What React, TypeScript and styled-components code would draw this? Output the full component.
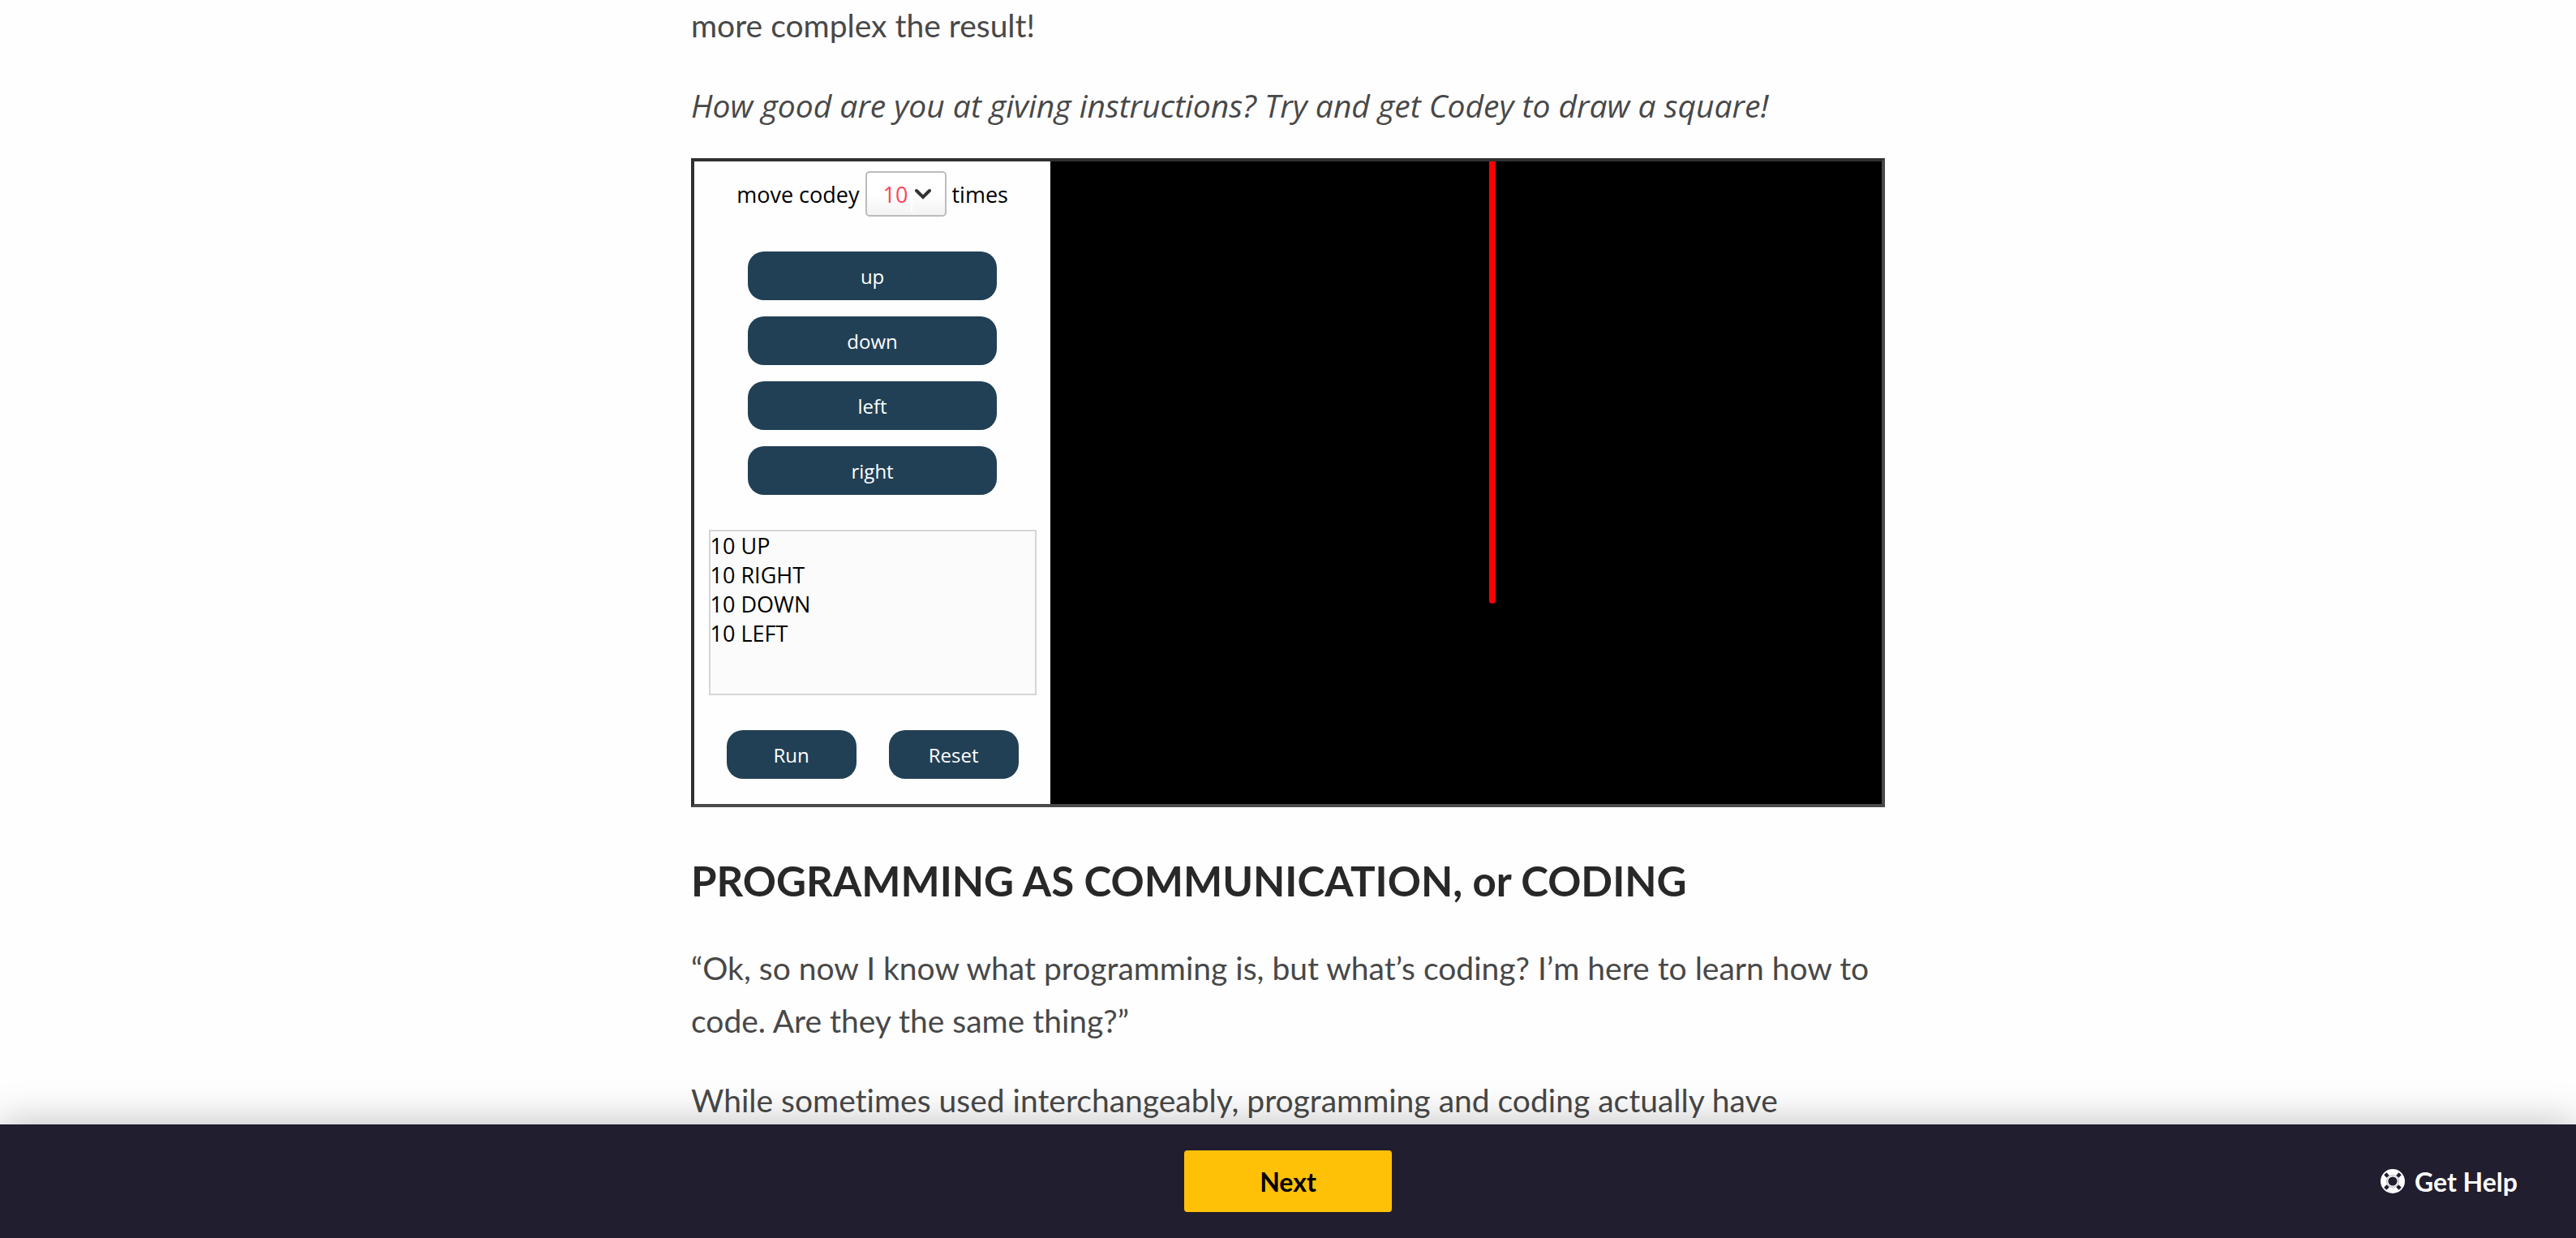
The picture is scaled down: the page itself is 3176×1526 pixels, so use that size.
import React, { useState } from "react";
import styled, { createGlobalStyle } from "styled-components";

const GlobalStyle = createGlobalStyle`
  *, *::before, *::after { box-sizing: border-box; }
  body {
    margin: 0;
    background: #fefefe;
    font-family: Lato, "Open Sans", sans-serif;
    font-variant-ligatures: none;
  }
`;

const Viewport = styled.div`
  display: flex;
  flex-direction: column;
  height: 100vh;
  overflow: hidden;
`;

const Scroll = styled.main`
  flex: 1;
  min-height: 0;
  overflow: hidden;
`;

const Article = styled.article`
  display: flex;
  flex-direction: column;
  gap: 33px;
  width: 100%;
  max-width: 1472px;
  margin: -1px auto 0;
`;

const Paragraph = styled.p`
  margin: 0;
  font-size: 39px;
  line-height: 65px;
  color: #484848;
`;

const Prompt = styled(Paragraph)`
  font-family: "Open Sans", sans-serif;
  font-style: italic;
`;

const Heading = styled.h2`
  margin: 27px 0 12px;
  font-size: 51px;
  line-height: 61px;
  font-weight: 700;
  color: #282828;
`;

const Frame = styled.section`
  display: flex;
  height: 800px;
  border: 4px solid;
  border-color: #303030 #4a4a4a #4a4a4a #303030;
  background: #fefefe;
  font-family: "Open Sans", sans-serif;
`;

const Controls = styled.div`
  display: flex;
  flex-direction: column;
  align-items: center;
  flex: 0 0 30%;
  padding-top: 12px;
`;

const MoveRow = styled.label`
  display: flex;
  align-items: center;
  gap: 7px;
  font-size: 27px;
  color: #000;
`;

const SelectBox = styled.span`
  display: grid;
  align-items: center;
  width: 100px;
  height: 56px;
`;

const Select = styled.select`
  grid-area: 1 / 1;
  width: 100%;
  height: 100%;
  appearance: none;
  padding: 0 0 0 20px;
  border: 2px solid #bcbcbc;
  border-radius: 5px;
  background:
    linear-gradient(#fff, #fff) 54px 28px / 2px 20px no-repeat,
    linear-gradient(#fff 50%, #f3f3f3);
  color: #fd4659;
  font: inherit;
`;

const Chevron = styled.svg`
  grid-area: 1 / 1;
  justify-self: end;
  margin-right: 19px;
  pointer-events: none;
`;

const Button = styled.button`
  height: 60px;
  border: 0;
  border-radius: 20px;
  background: #224055;
  color: #fff;
  font: 24px "Open Sans", sans-serif;
`;

const Directions = styled.div`
  display: grid;
  gap: 20px;
  width: 70%;
  margin-top: 43px;
`;

const Program = styled.textarea`
  display: block;
  width: 92%;
  height: 204px;
  margin-top: 43px;
  padding: 0;
  border: 2px solid #d5d5d5;
  background: #fbfbfb;
  color: #000;
  font: 27px/36px "Open Sans", sans-serif;
  resize: none;
`;

const Actions = styled.div`
  display: grid;
  grid-template-columns: 160px 160px;
  gap: 40px;
  margin-top: 43px;
`;

const Stage = styled.div`
  flex: 1;
  display: flex;
  background: #000;
`;

const Drawing = styled.svg`
  width: 100%;
  height: 100%;
`;

const Footer = styled.footer`
  z-index: 1;
  display: grid;
  grid-template-columns: 1fr 256px 1fr;
  align-items: center;
  height: 140px;
  background: #211e2f;
  box-shadow: 0 0 50px rgba(0, 0, 0, 0.27);
`;

const Next = styled.button`
  grid-column: 2;
  height: 76px;
  border: 0;
  border-radius: 4px;
  background: #ffc107;
  color: #000;
  font: 700 32px Lato, sans-serif;
`;

const Help = styled.a`
  justify-self: end;
  display: flex;
  align-items: center;
  gap: 12px;
  margin-right: 72px;
  color: #fff;
  font-size: 32px;
  font-weight: 700;
  text-decoration: none;
`;

const LifeRing = () => (
  <svg width="30" height="30" viewBox="0 0 30 30" aria-hidden="true">
    <circle cx="15" cy="15" r="15" fill="#fff" />
    <circle cx="15" cy="15" r="7.4" fill="none" stroke="#8f8e96" strokeWidth="0.7" />
    <path
      d="M5.800 5.800 9.200 9.200M24.200 5.800 20.800 9.200M5.800 24.200 9.200 20.800M24.200 24.200 20.800 20.800"
      stroke="#211e2f"
      strokeWidth="4.4"
    />
    <circle cx="15" cy="15" r="5.6" fill="#211e2f" />
  </svg>
);

const directions = ["up", "down", "left", "right"];

export default function App() {
  const [count, setCount] = useState("10");
  const [steps, setSteps] = useState("10 UP\n10 RIGHT\n10 DOWN\n10 LEFT");
  return (
    <Viewport>
      <GlobalStyle />
      <Scroll>
        <Article>
          <Paragraph>more complex the result!</Paragraph>
          <Prompt>How good are you at giving instructions? Try and get Codey to draw a square!</Prompt>
          <Frame>
            <Controls>
              <MoveRow>
                <span>move codey</span>
                <SelectBox>
                  <Select value={count} onChange={(e) => setCount(e.target.value)}>
                    <option>1</option>
                    <option>5</option>
                    <option>10</option>
                  </Select>
                  <Chevron width="20" height="14" viewBox="0 0 20 14" aria-hidden="true">
                    <path d="M2 3 10 11 18 3" fill="none" stroke="#333" strokeWidth="4" strokeLinecap="round" />
                  </Chevron>
                </SelectBox>
                <span>times</span>
              </MoveRow>
              <Directions>
                {directions.map((d) => (
                  <Button key={d} type="button" onClick={() => setSteps(`${steps}\n${count} ${d.toUpperCase()}`)}>
                    {d}
                  </Button>
                ))}
              </Directions>
              <Program aria-label="Instructions" value={steps} onChange={(e) => setSteps(e.target.value)} />
              <Actions>
                <Button type="button">Run</Button>
                <Button type="button" onClick={() => setSteps("")}>Reset</Button>
              </Actions>
            </Controls>
            <Stage>
              <Drawing viewBox="0 0 1025 792" preserveAspectRatio="none" aria-label="Codey's drawing">
                <path d="M545 -10V541" stroke="#f00" strokeWidth="8" strokeLinecap="round" />
              </Drawing>
            </Stage>
          </Frame>
          <Heading>PROGRAMMING AS COMMUNICATION, or CODING</Heading>
          <Paragraph>
            “Ok, so now I know what programming is, but what’s coding? I’m here to learn how to code. Are they the
            same thing?”
          </Paragraph>
          <Paragraph>While sometimes used interchangeably, programming and coding actually have</Paragraph>
        </Article>
      </Scroll>
      <Footer>
        <Next type="button">Next</Next>
        <Help href="#help">
          <LifeRing />
          Get Help
        </Help>
      </Footer>
    </Viewport>
  );
}
